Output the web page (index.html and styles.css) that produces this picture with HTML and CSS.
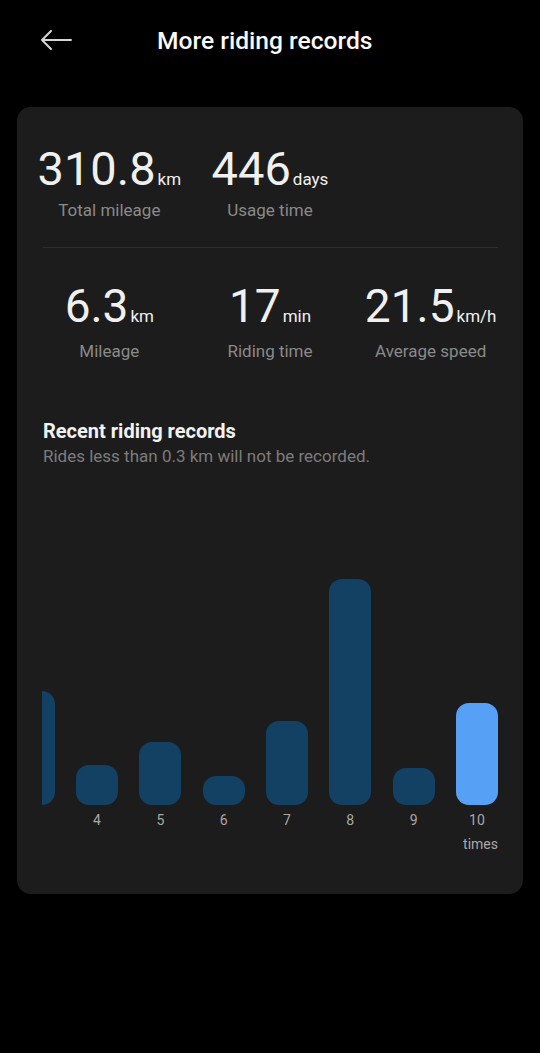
FILE: index.html
```html
<!DOCTYPE html>
<html lang="en">
<head>
  <meta charset="UTF-8" />
  <meta name="viewport" content="width=device-width, initial-scale=1.0" />
  <title>More riding records</title>
  <link rel="stylesheet" href="styles.css">
</head>
<body>
  <header class="topbar">
    <svg class="back" width="32" height="20" viewBox="0 0 32 20">
      <path d="M31 10H2M11 1L2 10l9 9" fill="none" stroke="#d6d6d6" stroke-width="2" stroke-linecap="round" stroke-linejoin="round" />
    </svg>
    <h1>More riding records</h1>
  </header>

  <main class="card">
    <div class="stats stats-total">
      <div class="stat">
        <div class="num">310.8<span class="unit">km</span></div>
        <div class="label">Total mileage</div>
      </div>
      <div class="stat">
        <div class="num">446<span class="unit">days</span></div>
        <div class="label">Usage time</div>
      </div>
    </div>

    <div class="divider"></div>

    <div class="stats stats-last">
      <div class="stat">
        <div class="num">6.3<span class="unit">km</span></div>
        <div class="label">Mileage</div>
      </div>
      <div class="stat">
        <div class="num">17<span class="unit">min</span></div>
        <div class="label">Riding time</div>
      </div>
      <div class="stat">
        <div class="num">21.5<span class="unit">km/h</span></div>
        <div class="label">Average speed</div>
      </div>
    </div>

    <h2>Recent riding records</h2>
    <p class="hint">Rides less than 0.3 km will not be recorded.</p>

    <div class="chart">
      <div class="chart-inner">
        <div class="col"><div class="bars"><div class="bar" style="height:114px"></div></div><span></span></div>
        <div class="col"><div class="bars"><div class="bar" style="height:40px"></div></div><span>4</span></div>
        <div class="col"><div class="bars"><div class="bar" style="height:63px"></div></div><span>5</span></div>
        <div class="col"><div class="bars"><div class="bar" style="height:29px"></div></div><span>6</span></div>
        <div class="col"><div class="bars"><div class="bar" style="height:84px"></div></div><span>7</span></div>
        <div class="col"><div class="bars"><div class="bar" style="height:226px"></div></div><span>8</span></div>
        <div class="col"><div class="bars"><div class="bar" style="height:37px"></div></div><span>9</span></div>
        <div class="col"><div class="bars"><div class="bar active" style="height:102px"></div></div><span>10</span></div>
      </div>
    </div>
    <div class="axis-unit">times</div>
  </main>
</body>
</html>
```

FILE: styles.css
```css
body {
  margin: 0;
  background: #000;
  color: #f2f2f2;
  font-family: Roboto, "Noto Sans", sans-serif;
}

.topbar {
  height: 80px;
  display: flex;
  align-items: center;
  padding-left: 40px;
}

.back {
  flex: none;
}

h1 {
  margin: 0 0 0 85px;
  font-size: 24.6px;
  font-weight: 500;
  color: #fafafa;
}

.card {
  margin: 27px 17px 0;
  padding: 36px 12px 40px;
  background: #1c1c1c;
  border-radius: 14px;
}

.stats {
  display: grid;
  grid-template-columns: repeat(3, 1fr);
  text-align: center;
}

.num {
  font-size: 47px;
  line-height: 52px;
  color: #f0f0f0;
}

.unit {
  font-size: 17px;
  margin-left: 2px;
}

.label {
  margin-top: -5px;
  font-size: 17px;
  line-height: 20px;
  color: #8a8a8a;
}

.divider {
  height: 1px;
  background: #2e2e2e;
  margin: 27px 13px 32px 14px;
}

.stats-last .num {
  font-size: 46px;
}

.stats-last .label {
  margin-top: -1px;
}

h2 {
  margin: 58px 0 0 14px;
  font-size: 20px;
  line-height: 24px;
  font-weight: 700;
  color: #f2f2f2;
}

.hint {
  margin: 3px 0 0 14px;
  font-size: 17px;
  line-height: 20px;
  color: #7c7c7c;
}

.chart {
  margin-left: 13px;
  overflow: hidden;
}

.chart-inner {
  display: flex;
  margin-left: -40px;
}

.col {
  flex: none;
  width: 63.33px;
  display: flex;
  flex-direction: column;
  align-items: center;
}

.bars {
  height: 339px;
  display: flex;
  align-items: flex-end;
}

.bar {
  width: 42px;
  background: #134164;
  border-radius: 13px;
}

.bar.active {
  background: #56a1f6;
}

.col span {
  height: 20px;
  margin-top: 5px;
  font-size: 14px;
  line-height: 20px;
  color: #a8a8a8;
}

.axis-unit {
  margin: 4px 13px 0 0;
  text-align: right;
  font-size: 14px;
  line-height: 20px;
  color: #a8a8a8;
}
```
